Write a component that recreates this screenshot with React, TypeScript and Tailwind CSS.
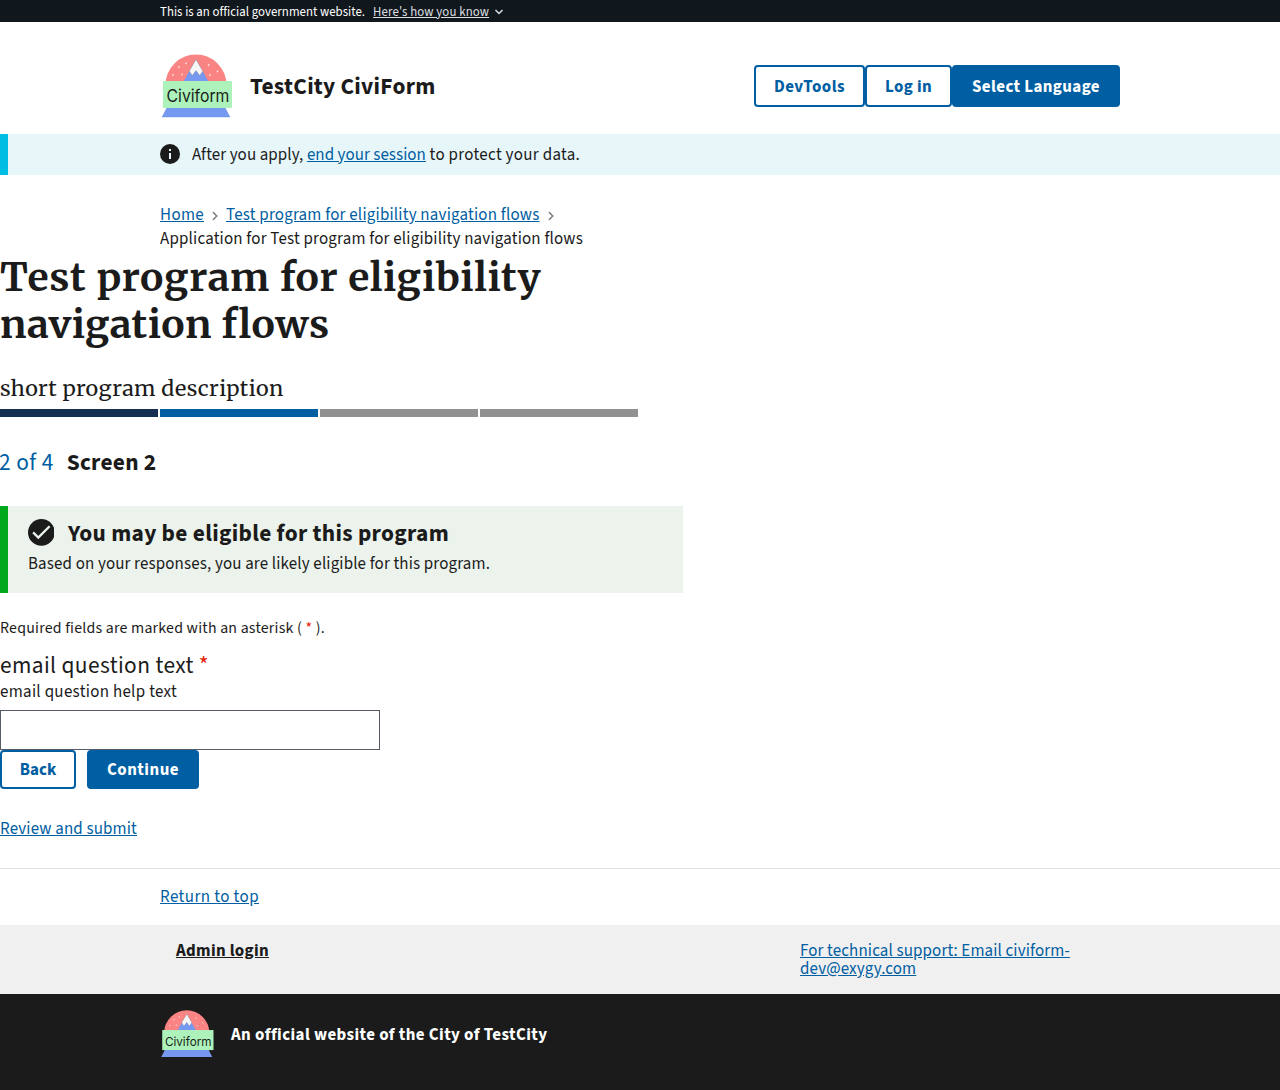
function Logo({ className }: { className: string }) {
  return (
    <svg viewBox="0 0 72 72" className={className} aria-label="Civiform">
      <path d="M5.5 35a30.5 30.5 0 0 1 61 0Z" fill="#fa8484" />
      <path d="M36 9.5 48.5 31.5h-25Z" fill="#7698f0" />
      <path d="M36 9.5 42.7 21 39.8 25.6 36 20.6 32.2 25.6 29.3 21Z" fill="#f7f7f7" stroke="#8d8080" strokeWidth=".4" />
      <g fill="#ffdede">
        <circle cx="19" cy="17" r=".9" /><circle cx="26" cy="13.3" r=".9" /><circle cx="13" cy="25" r=".9" /><circle cx="22" cy="24.5" r=".9" />
        <circle cx="48.7" cy="15" r=".9" /><circle cx="57.5" cy="21.3" r=".9" /><circle cx="50" cy="25" r=".9" />
      </g>
      <rect x="3" y="31" width="69" height="27" fill="#adf2ba" />
      <path d="M6.5 58h59l4.8 9.3H1.7Z" fill="#7698f0" />
      <text x="6.6" y="51.9" fontFamily="Inter, sans-serif" fontWeight="400" fontSize="16.6" textLength="62.8" lengthAdjust="spacingAndGlyphs" fill="#1a1f1b">Civiform</text>
    </svg>
  );
}

const link = "underline text-[#005ea2]";
const btn = "flex items-center justify-center whitespace-nowrap rounded-[4px] border-2 border-[#005ea2] font-bold";

function Chevron({ className }: { className: string }) {
  return (
    <svg viewBox="0 0 6 10" className={`h-[10px] w-[6px] ${className}`} fill="none" stroke="#71767a" strokeWidth="1.4">
      <path d="M1 1.2 4.8 5 1 8.8" />
    </svg>
  );
}

export default function App() {
  return (
    <div className="h-[1090px] w-full overflow-hidden bg-white font-['Source_Sans_3','Noto_Sans_CJK_SC',sans-serif] text-[16.96px] leading-[24px] whitespace-nowrap text-[#1b1b1b]">
      <div className="h-[22px] bg-[#11181d]">
        <div className="mx-auto flex h-[22px] w-[960px] items-center pt-px text-[12.8px] text-white">
          <span className="tracking-[0.048px]">This is an official government website.</span>
          <a className="ml-2 tracking-[0.125px] text-[#dcdee0] underline">Here's how you know</a>
          <svg viewBox="0 0 10 8" className="ml-[5px] h-[8px] w-[10px]" fill="none" stroke="#dcdee0" strokeWidth="1.5"><path d="M1.5 2 5 5.5 8.5 2" /></svg>
        </div>
      </div>
      <header className="h-[112px]">
        <div className="mx-auto flex h-full w-[960px] items-center pt-4">
          <Logo className="h-[72px] w-[72px]" />
          <div className="ml-[18px] pt-[2px] text-[23.36px] font-bold tracking-[0.28px]">TestCity CiviForm</div>
          <div className="ml-auto flex h-[42px]">
            <button className={`${btn} w-[111px] pt-[2px] tracking-[0.472px] text-[#005ea2]`}>DevTools</button>
            <button className={`${btn} w-[87px] pt-[2px] tracking-[0.378px] text-[#005ea2]`}>Log in</button>
            <button className={`${btn} w-[168px] bg-[#005ea2] pt-[2px] tracking-[0.405px] text-white`}>Select Language</button>
          </div>
        </div>
      </header>
      <div className="h-[41px] border-l-8 border-[#00bde3] bg-[#e7f6f8]">
        <div className="ml-[152px] flex h-10 items-center">
          <svg viewBox="0 0 20 20" className="h-5 w-5"><circle cx="10" cy="10" r="10" fill="#1b1b1b" /><path d="M9 5h2v2H9zM9 9h2v6H9z" fill="#e7f6f8" /></svg>
          <p className="ml-3 pt-px"><span className="tracking-[0.09px]">After you apply, </span><a className={`${link} tracking-[0.046px]`}>end your session</a><span className="tracking-[0.31px]"> to protect your data.</span></p>
        </div>
      </div>
      <nav className="mx-auto mt-7 w-[960px]">
        <div className="flex h-6 items-center">
          <a className={`${link} tracking-[0.334px]`}>Home</a>
          <Chevron className="mt-px mr-2 ml-2" />
          <a className={`${link} tracking-[0.207px]`}>Test program for eligibility navigation flows</a>
          <Chevron className="mt-px ml-2" />
        </div>
        <div className="h-6 tracking-[0.189px]">Application for Test program for eligibility navigation flows</div>
      </nav>
      <main>
        <h1 className="mt-[3px] font-['Merriweather','Noto_Serif',serif] text-[39.04px] leading-[47px] font-bold">
          <span className="tracking-[0.67px]">Test program for eligibility</span><br />
          <span className="tracking-[0.38px]">navigation flows</span>
        </h1>
        <p className="mt-[22px] h-[37px] font-['Merriweather','Noto_Serif',serif] text-[21.6px] leading-[37px] tracking-[0.375px]">short program description</p>
        <div className="mt-[2px] flex h-2 gap-[2px]">
          <div className="w-[158px] bg-[#162e51]" />
          <div className="w-[158px] bg-[#005ea2]" />
          <div className="w-[158px] bg-[#919191]" />
          <div className="w-[158px] bg-[#919191]" />
        </div>
        <h2 className="mt-[30px] flex h-8 items-center text-[23.36px]">
          <span className="-ml-px tracking-[0.45px] text-[#005ea2]">2 of 4</span>
          <span className="ml-[13px] font-bold tracking-[0.25px]">Screen 2</span>
        </h2>
        <section className="mt-[27px] h-[87px] w-[683px] border-l-8 border-[#00a91c] bg-[#ecf3ec] pt-[11px] pl-5">
          <div className="flex h-8 items-center">
            <svg viewBox="0 0 20 20" className="-mt-px -ml-[0.4px] h-[26.8px] w-[26.8px]"><circle cx="10" cy="10" r="10" fill="#1b1b1b" /><path d="m3.8 10 3.9 3.9 8.4-8.5" fill="none" stroke="#ecf3ec" strokeWidth="1.7" /></svg>
            <h3 className="ml-[13.6px] pt-[2px] text-[23.36px] font-bold tracking-[0.32px]">You may be eligible for this program</h3>
          </div>
          <p className="mt-[3px] tracking-[0.143px]">Based on your responses, you are likely eligible for this program.</p>
        </section>
        <p className="mt-[23px] text-[15.84px] tracking-[0.23px]">Required fields are marked with an asterisk ( <span className="text-[#e52207]">*</span> ).</p>
        <div className="mt-[10px] h-8 text-[23.36px] leading-8 tracking-[0.4px]">email question text <span className="text-[#e52207]">*</span></div>
        <div className="-mt-[2px] tracking-[0.303px]">email question help text</div>
        <input aria-label="email question text" className="mt-[6px] block h-10 w-[380px] border border-[#565c65]" />
        <div className="flex h-[39px] gap-[11px]">
          <button className={`${btn} w-[76px] text-[#005ea2]`}>Back</button>
          <button className={`${btn} w-[112px] bg-[#005ea2] tracking-[0.476px] text-white`}>Continue</button>
        </div>
        <div className="mt-7"><a className={`${link} tracking-[0.16px]`}>Review and submit</a></div>
      </main>
      <footer className="mt-[27px] border-t border-[#dfe1e2]">
        <div className="mx-auto h-[56px] w-[960px] pt-4"><a className={`${link} tracking-[0.438px]`}>Return to top</a></div>
        <div className="h-[69px] bg-[#f0f0f0]">
          <div className="mx-auto flex w-[960px] justify-between pt-[17px] leading-[18px]">
            <a className="ml-4 self-start font-bold tracking-[0.334px] underline">Admin login</a>
            <a className={`w-[320px] tracking-[0.13px] ${link}`}>For technical support: Email civiform-<br />dev@exygy.com</a>
          </div>
        </div>
        <div className="h-24 bg-[#1b1b1b]">
          <div className="mx-auto flex h-[80px] w-[960px] items-center font-bold text-white">
            <Logo className="-mt-px h-[53.5px] w-[53.5px]" />
            <span className="ml-[17.5px] pt-[2px] tracking-[0.407px]">An official website of the City of TestCity</span>
          </div>
        </div>
      </footer>
    </div>
  );
}
